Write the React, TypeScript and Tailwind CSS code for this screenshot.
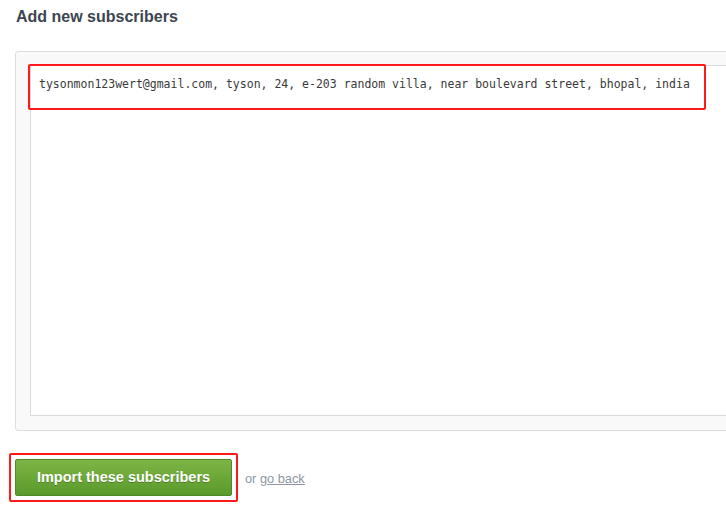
import React from 'react';

const line =
  'tysonmon123wert@gmail.com, tyson, 24, e-203 random villa, near boulevard street, bhopal, india';

export default function App() {
  return (
    <div className="w-[726px] h-[510px] overflow-hidden bg-white font-['Liberation_Sans',Arial,sans-serif]">
      <h2 className="pl-4 pt-[7px] text-[16px] leading-[20px] font-bold text-[#3d4550]">
        Add new subscribers
      </h2>

      <div className="ml-[15px] mt-[24px] w-[740px] h-[380px] rounded-[3px] border border-[#dcdde0] bg-[#f9f9f9] pl-[14px] pt-[13px] pb-[14px]">
        <div className="relative h-full border border-[#d8dae0] bg-white">
          <div className="pl-2 pt-[10px] font-['DejaVu_Sans_Mono',monospace] text-[11.5px] leading-[16px] text-[#3a3a3a] whitespace-nowrap">
            {line}
          </div>
          {/* annotation box */}
          <div className="absolute left-[-3px] top-[-2px] w-[678px] h-[46px] rounded-[2px] border-2 border-[#ff1a1a]" />
        </div>
      </div>

      <div className="mt-[22px] flex items-center">
        <div className="ml-[9px] rounded-[2px] border-2 border-[#ff1a1a] p-1">
          <button className="w-[217px] h-[37px] rounded-[2px] border border-[#4e8a25] bg-gradient-to-b from-[#7db545] to-[#5a9a2b] text-[14.5px] font-bold text-white [text-shadow:0_1px_0_rgba(0,0,0,0.25)]">
            Import these subscribers
          </button>
        </div>
        <span className="ml-[7px] mt-[3px] text-[12.8px] text-[#8d96a2]">
          or <a href="#" className="underline">go back</a>
        </span>
      </div>
    </div>
  );
}
